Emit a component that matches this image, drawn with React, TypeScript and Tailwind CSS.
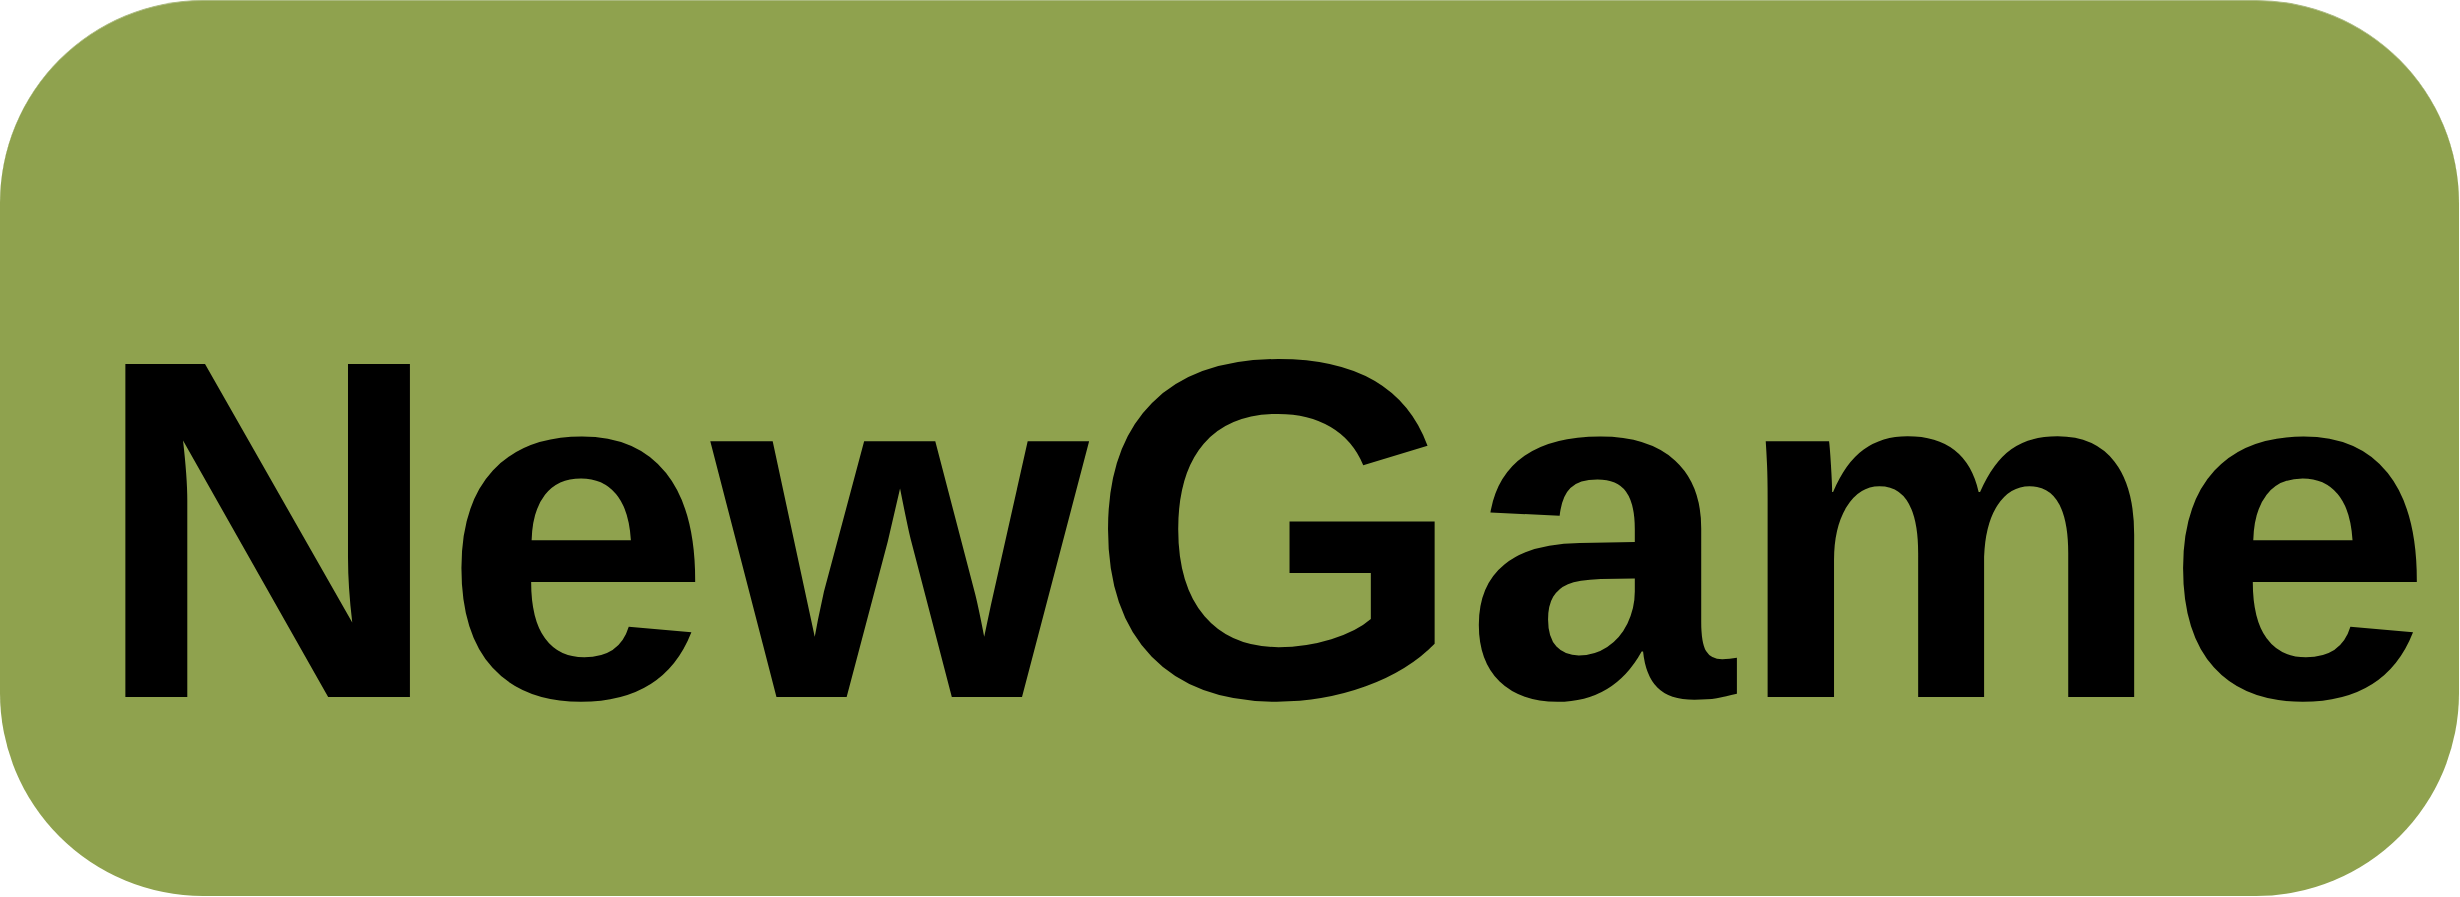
export default function App() {
  return (
    <div className="w-[2460px] h-[897px] bg-white">
      {/* the whole page is one big rounded button */}
      <button className="block w-[2459px] h-[896px] rounded-[203px] bg-[#8fa24e] border-t border-t-[#aab97f] pt-[162px] pl-[93px] text-left">
        <span className="block font-['Liberation_Sans',Arial,sans-serif] font-bold text-black text-[484px] leading-none">
          NewGame
        </span>
      </button>
    </div>
  );
}
